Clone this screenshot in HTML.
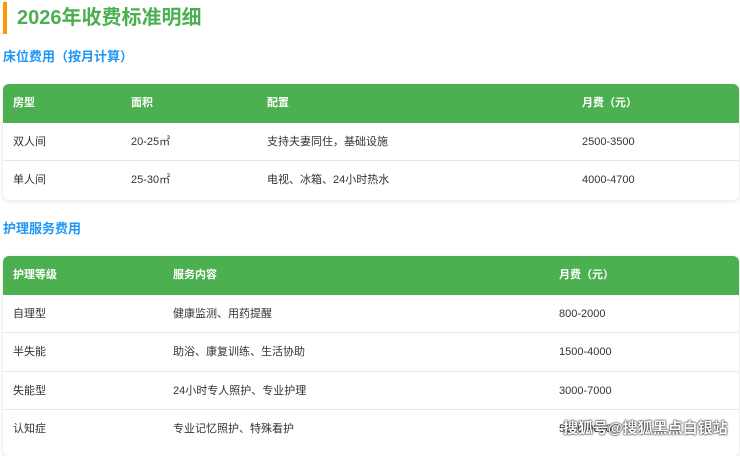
<!DOCTYPE html>
<html><head><meta charset="utf-8"><style>
*{margin:0;padding:0;box-sizing:border-box}
body{width:740px;height:444px;overflow:hidden;background:#fff;font-family:"Liberation Sans","Noto Sans CJK SC",sans-serif;color:#333;position:relative}
.bar{position:absolute;left:3px;top:2px;width:4px;height:32px;background:#ff9800}
h1{position:absolute;left:17px;top:4px;font-size:20px;color:#4caf50;font-weight:bold;line-height:28px}
h2{position:absolute;left:3px;font-size:13px;color:#2196f3;font-weight:bold;line-height:18px}
.tbl{position:absolute;left:3px;width:736px;border-radius:6px;overflow:hidden;box-shadow:0 1px 4px rgba(0,0,0,.12);background:#fff}
.row{position:relative;height:38.5px;border-bottom:1px solid #e6e6e6;font-size:11px;line-height:38px}
.row:last-child{border-bottom:none}
.hd{background:#4caf50;color:#fff;font-weight:bold;border-bottom:none}
.row span{position:absolute;top:0}
.wm{position:absolute;left:563px;top:419px;font-size:15px;color:#fff;font-weight:bold;text-shadow:0 0 2px #000,0 0 1px #000;line-height:20px}
</style></head><body>
<div class="bar"></div>
<h1>2026年收费标准明细</h1>
<h2 style="top:48px">床位费用（按月计算）</h2>
<div class="tbl" style="top:84px">
<div class="row hd"><span style="left:10px">房型</span><span style="left:128px">面积</span><span style="left:264px">配置</span><span style="left:579px">月费（元）</span></div>
<div class="row"><span style="left:10px">双人间</span><span style="left:128px">20-25㎡</span><span style="left:264px">支持夫妻同住，基础设施</span><span style="left:579px">2500-3500</span></div>
<div class="row"><span style="left:10px">单人间</span><span style="left:128px">25-30㎡</span><span style="left:264px">电视、冰箱、24小时热水</span><span style="left:579px">4000-4700</span></div>
</div>
<h2 style="top:220px">护理服务费用</h2>
<div class="tbl" style="top:256px;height:200px">
<div class="row hd"><span style="left:10px">护理等级</span><span style="left:170px">服务内容</span><span style="left:556px">月费（元）</span></div>
<div class="row"><span style="left:10px">自理型</span><span style="left:170px">健康监测、用药提醒</span><span style="left:556px">800-2000</span></div>
<div class="row"><span style="left:10px">半失能</span><span style="left:170px">助浴、康复训练、生活协助</span><span style="left:556px">1500-4000</span></div>
<div class="row"><span style="left:10px">失能型</span><span style="left:170px">24小时专人照护、专业护理</span><span style="left:556px">3000-7000</span></div>
<div class="row"><span style="left:10px">认知症</span><span style="left:170px">专业记忆照护、特殊看护</span><span style="left:556px">5000-9000</span></div>
</div>
<div class="wm">搜狐号@搜狐黑点白银站</div>
</body></html>
